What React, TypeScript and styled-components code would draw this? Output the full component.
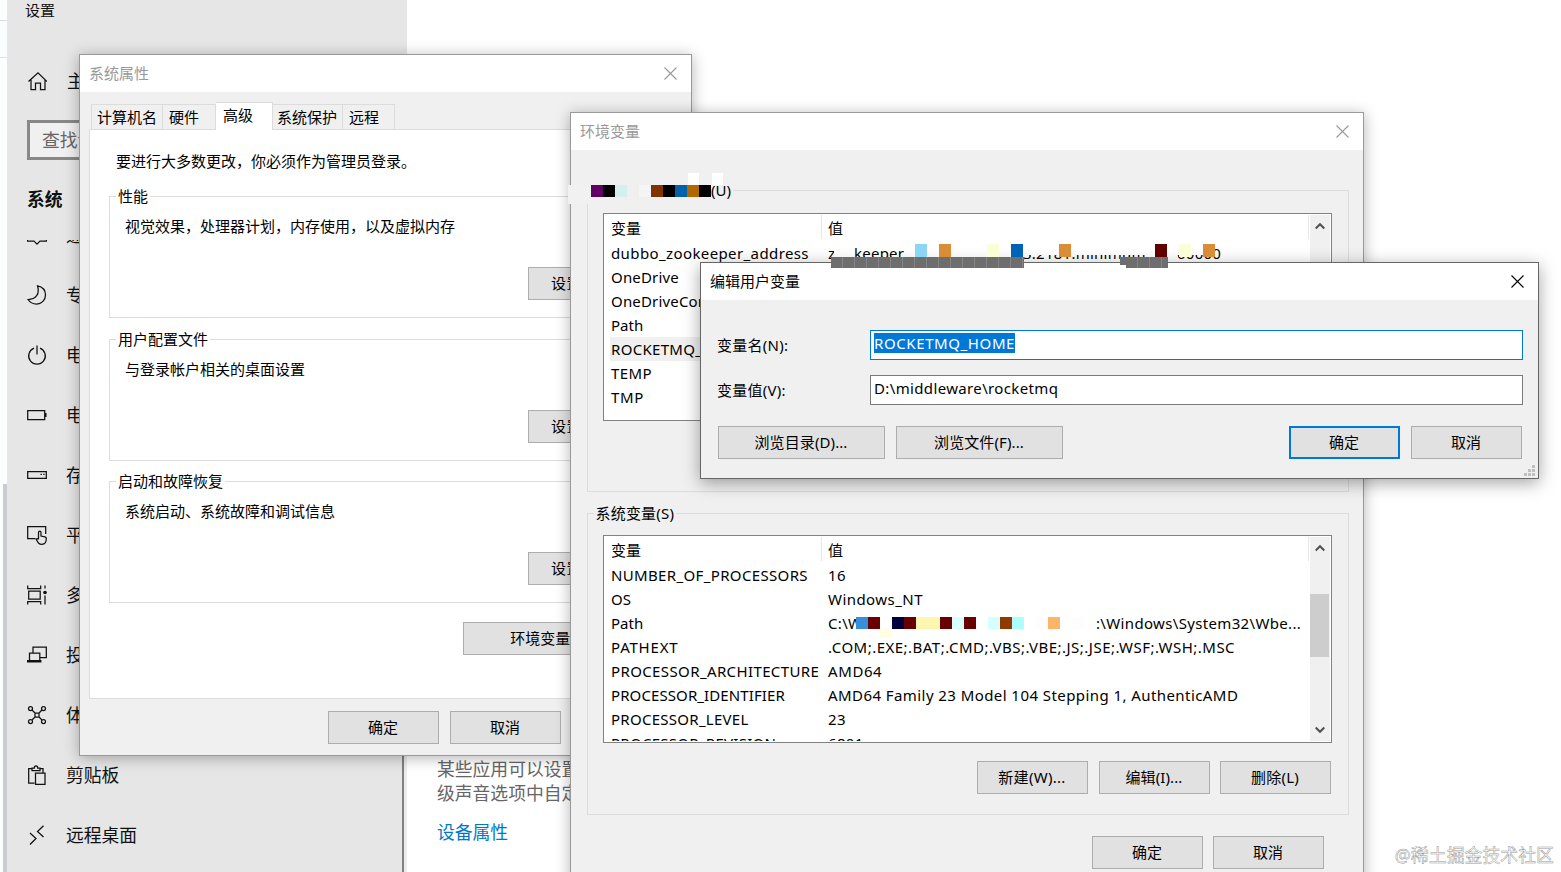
import React from 'react';
import styled, { createGlobalStyle, css } from 'styled-components';

const GlobalStyle = createGlobalStyle`
  *, *::before, *::after { box-sizing: border-box; }
  body { margin: 0; background: #fff; overflow: hidden; }
  body, button {
    font-family: "Noto Sans", "Noto Sans CJK SC", sans-serif;
    font-size: 15px;
    line-height: 20px;
    color: #000;
  }
`;

const Desktop = styled.div`
  position: relative;
  width: 1561px;
  height: 872px;
  overflow: hidden;
  background: #fff;
`;

/* ---------- Settings app in the background ---------- */

const SettingsApp = styled.div`
  display: flex;
  height: 872px;
  color: #111;
  font-size: 17.8px;
  line-height: 24px;
`;

const Edge = styled.div`
  width: 7px;
  display: flex;
  flex-direction: column;
  background: #fdfefe;
`;

const EdgeCard = styled.div`
  height: 38px;
  margin-top: 20px;
  border-top: 1px solid #dcdfe2;
  border-bottom: 1px solid #d8e4e4;
  background: #f9fdfd;
`;

const EdgeThumb = styled.div`
  width: 4px;
  margin: 426px 0 0 3px;
  flex: 1;
  background: #c9cbd0;
`;

const Sidebar = styled.div`
  width: 400px;
  display: flex;
  flex-direction: column;
  background: #e6e6e6;
`;

const AppTitle = styled.div`
  font-size: 15px;
  line-height: 20px;
  padding-left: 18px;
`;

const NavRow = styled.div`
  display: flex;
  align-items: center;
  flex: none;
  height: 60px;
  padding-left: 20px;
  gap: 19px;
  svg { flex: none; }
`;

const HomeRow = styled(NavRow)`
  margin-top: 31px;
  gap: 20px;
`;

const SearchBox = styled.div`
  width: 352px;
  height: 40px;
  flex: none;
  margin: 9px 0 0 20px;
  border: 3px solid #888;
  padding-left: 12px;
  line-height: 34px;
  color: #666;
  background: #f0f0f0;
`;

const SectionTitle = styled.div`
  margin: 27px 0 0 20px;
  font-weight: 700;
`;

const NavScroll = styled.div`
  flex: 1;
  min-height: 0;
  margin-top: 29px;
  overflow: hidden;
`;

const NavList = styled.div`
  margin-top: -35px;
`;

const Divider = styled.div`
  width: 5px;
  height: 120px;
  align-self: flex-end;
  margin-left: -5px;
  border-left: 2px solid #808080;
  background: #ececec;
`;

const SettingsContent = styled.div`
  padding: 757px 0 0 30px;
  width: 260px;
  white-space: nowrap;
  color: #666;
`;

const SettingsLink = styled.div`
  margin-top: 15px;
  color: #0078c8;
`;

/* ---------- Shared dialog parts ---------- */

const Window = styled.section<{ $x: number; $y: number; $w: number; $h: number; $active?: boolean }>`
  position: absolute;
  left: ${p => p.$x}px;
  top: ${p => p.$y}px;
  width: ${p => p.$w}px;
  height: ${p => p.$h}px;
  display: flex;
  flex-direction: column;
  background: #f0f0f0;
  border: 1px solid ${p => (p.$active ? '#666' : '#999')};
  box-shadow: ${p => (p.$active ? '0 4px 16px rgba(0,0,0,.36)' : '0 2px 14px rgba(0,0,0,.3)')};
`;

const TitleBar = styled.header<{ $active?: boolean }>`
  display: flex;
  justify-content: space-between;
  align-items: center;
  height: 37px;
  flex: none;
  padding: 0 14.5px 2px 9px;
  background: #fff;
  color: ${p => (p.$active ? '#000' : '#999')};
  svg { margin-top: 1px; }
`;

const Button = styled.button<{ $w?: number; $primary?: boolean; $ls?: number }>`
  width: ${p => p.$w ?? 111}px;
  height: 33px;
  flex: none;
  padding: 0 1px 2px 0;
  white-space: nowrap;
  letter-spacing: ${p => p.$ls ?? 0}px;
  background: #e1e1e1;
  border: ${p => (p.$primary ? '2px solid #0078d7' : '1px solid #adadad')};
`;

const ButtonRow = styled.div<{ $left: number; $top: number; $gap?: number }>`
  display: flex;
  gap: ${p => p.$gap ?? 11}px;
  margin: ${p => p.$top}px 0 0 ${p => p.$left}px;
`;

const DeleteButton = styled(Button)`
  margin-left: -1px;
`;

const Group = styled.fieldset<{ $top: number; $w: number; $h: number; $pad: string }>`
  margin: ${p => p.$top}px 0 0;
  width: ${p => p.$w}px;
  height: ${p => p.$h}px;
  min-width: 0;
  padding: ${p => p.$pad};
  border: 1px solid #dcdcdc;
`;

const Legend = styled.legend<{ $shift: number; $ls?: number }>`
  display: flex;
  align-items: center;
  height: 21px;
  line-height: 21px;
  margin-left: ${p => p.$shift}px;
  padding: 0 2px;
  letter-spacing: ${p => p.$ls ?? 0}px;
`;

/* ---------- System properties ---------- */

const PropsBody = styled.div`
  display: flex;
  flex-direction: column;
  padding: 10px 0 0 9px;
`;

const Tabs = styled.div`
  display: flex;
  align-items: flex-end;
  height: 27px;
  padding-left: 2px;
`;

const Tab = styled.div<{ $w: number; $pad?: number; $active?: boolean; $first?: boolean }>`
  width: ${p => p.$w}px;
  height: 25px;
  padding-left: ${p => p.$pad ?? 6}px;
  line-height: 25px;
  white-space: nowrap;
  border-top: 1px solid #dcdcdc;
  border-right: 1px solid #dcdcdc;
  background: #f0f0f0;
  ${p => p.$first && css`border-left: 1px solid #dcdcdc;`}
  ${p => p.$active && css`
    height: 28px;
    margin-bottom: -1px;
    background: #fff;
    line-height: 24px;
    z-index: 1;
  `}
`;

const TabPanel = styled.div`
  width: 592px;
  height: 570px;
  padding: 21px 0 0 19px;
  border: 1px solid #dcdcdc;
  background: #fff;
`;

const Intro = styled.p`
  margin: 0 0 0 7px;
`;

/* ---------- Variable lists ---------- */

const ListBox = styled.div`
  display: flex;
  width: 729px;
  height: 208px;
  padding: 1px;
  border: 1px solid #828282;
  background: #fff;
`;

const Table = styled.div`
  width: 705px;
  overflow: hidden;
`;

const Row = styled.div<{ $header?: boolean; $selected?: boolean }>`
  display: grid;
  grid-template-columns: 217px 487px;
  height: ${p => (p.$header ? 26 : 24)}px;
  white-space: pre;
  ${p => p.$selected && css`background: linear-gradient(90deg, #fff 5px, #f0f0f0 5px);`}
`;

const Cell = styled.div<{ $header?: boolean; $ls?: number }>`
  padding-left: 6px;
  height: 24px;
  display: flex;
  align-items: center;
  letter-spacing: ${p => p.$ls ?? 0}px;
  ${p => p.$header && css`border-right: 1px solid #e5e5e5; padding-top: 2px;`}
`;

const Part = styled.span<{ $w: number }>`
  width: ${p => p.$w}px;
  flex: none;
  overflow: hidden;
`;

const ScrollTrack = styled.div`
  width: 20px;
  display: flex;
  flex-direction: column;
  align-items: center;
  justify-content: space-between;
  background: #f0f0f0;
  padding: 7px 1px 7px 0;
`;

const ScrollThumb = styled.div`
  width: 19px;
  height: 63px;
  margin: 42px 0 auto;
  background: #cdcdcd;
`;

const EnvBody = styled.div`
  padding: 30px 0 0 16px;
`;

/* ---------- Edit dialog ---------- */

const EditBody = styled.div`
  padding: 30px 0 0 16px;
`;

const FieldRow = styled.label`
  display: flex;
  align-items: center;
  height: 30px;
  margin-bottom: 15px;
`;

const FieldLabel = styled.span`
  width: 153px;
  letter-spacing: 0.25px;
`;

const Field = styled.div<{ $focus?: boolean; $ls?: number }>`
  width: 653px;
  height: 30px;
  padding: 2px 3px;
  border: 1px solid ${p => (p.$focus ? '#0078d7' : '#7a7a7a')};
  background: #fff;
  letter-spacing: ${p => p.$ls ?? 0}px;
`;

const Selected = styled.span`
  display: inline-block;
  background: #0078d7;
  color: #fff;
`;

const EditButtons = styled.div`
  display: flex;
  gap: 11px;
  margin: 21px 0 0 1px;
`;

const Spacer = styled.div`
  width: 204px;
`;

const Grip = styled.svg`
  position: absolute;
  right: 3px;
  bottom: 2px;
`;

/* ---------- Mosaic strips that hide private text ---------- */

const Strip = styled.span`
  display: inline-flex;
  flex: none;
`;

const Tile = styled.i<{ $c: string }>`
  width: 12px;
  height: 12px;
  background: ${p => p.$c};
`;

const Mask = styled.div<{ $x: number; $y: number; $w: number; $h: number; $c: string }>`
  position: absolute;
  left: ${p => p.$x}px;
  top: ${p => p.$y}px;
  width: ${p => p.$w}px;
  height: ${p => p.$h}px;
  background: ${p => p.$c};
`;

const Watermark = styled.div`
  position: absolute;
  right: 7px;
  bottom: 5px;
  font-size: 17.9px;
  line-height: 24px;
  color: #fff;
  -webkit-text-stroke: 0.5px #999;
  white-space: nowrap;
`;

/* ---------- Icons ---------- */

const Icon = ({ children }: { children: React.ReactNode }) => (
  <svg width="20" height="20" viewBox="0 0 20 20" fill="none" stroke="#111" strokeWidth="1.25">
    {children}
  </svg>
);

const HomeIcon = () => (
  <Icon><path d="M1.5 10.5 11 1.8l9 8.7M4 8.5v10h4.5v-6.500h5v6.500H18v-10" /></Icon>
);
const ChatIcon = () => (
  <Icon><path d="M.5 2.500h19v13.600h-6.500l-3 3-3-3H.5z" /></Icon>
);
const MoonIcon = () => (
  <Icon><path d="M10.500 .8c5 1 8 4.700 8 9.200 0 5-3.800 9-8.800 9-3.700 0-7-1.800-8.700-4.500C9 14.500 13 9 10.500.8z" /></Icon>
);
const PowerIcon = () => (
  <Icon><path d="M7 3.200a8.300 8.300 0 1 0 6 0M10 .5v9" /></Icon>
);
const BatteryIcon = () => (
  <Icon><path d="M.7 5.500h17v9H.7zM18.900 8v4" /></Icon>
);
const StorageIcon = () => (
  <Icon><path d="M.7 6.700h18.600v6.600H.7zM13.500 9.300h1.400M16.200 9.300h1.400" /></Icon>
);
const TabletIcon = () => (
  <Icon>
    <path d="M8.500 13.500H.7V1.500h18V9" />
    <path d="M11.500 14V7.500c0-2 2.500-2 2.500 0V11l4 .8c1 .3 1.300.7 1.300 1.700 0 3-1 5.800-4.300 5.800-3 0-4-1.300-5.800-5 .5-1 1.500-1 2.300.2" />
  </Icon>
);
const TaskIcon = () => (
  <Icon>
    <path d="M.7.500v3h13v-3M1.700 6h11.500v8H1.700zM.7 19.500v-3h13v3M18 .5v3M18 10.500v9" />
    <circle cx="18" cy="7.500" r="1.200" fill="#111" />
  </Icon>
);
const ProjectIcon = () => (
  <Icon><path d="M6 7.500V2h13.300v10.500h-6M2.500 8h10.300v7.500H2.500zM.5 15.500h13.300v1.300H.5z" /></Icon>
);
const ShareIcon = () => (
  <Icon>
    <circle cx="3.500" cy="3.500" r="2" /><circle cx="16.500" cy="3.500" r="2" />
    <circle cx="3.500" cy="16.500" r="2" /><circle cx="16.500" cy="16.500" r="2" />
    <path d="M8 8h4v4H8zM5 5l3 3M15 5l-3 3M5 15l3-3M15 15l-3-3" />
  </Icon>
);
const ClipIcon = () => (
  <Icon><path d="M7.500 18H1.700V3.500H5M13 3.500h3v4M5 5.500V3.200h2.300c0-3 3.400-3 3.400 0H13v2.300zM8.500 8H18v11.300H8.500z" /></Icon>
);
const RemoteIcon = () => (
  <Icon><path d="M3 8l6 5.500-6 6M16.500 .8 10.500 6.500l6 5.500" /></Icon>
);

const CloseIcon = ({ color }: { color: string }) => (
  <svg width="13" height="13" viewBox="0 0 13 13" stroke={color} strokeWidth="1.1">
    <path d="M.5 .5l12 12M12.500.5l-12 12" />
  </svg>
);

const Chevron = ({ down }: { down?: boolean }) => (
  <svg width="10" height="8" viewBox="0 0 10 8" fill="none" stroke="#505050" strokeWidth="2">
    <path d={down ? 'M.7 1.500 5 5.800l4.300-4.300' : 'M.7 6.500 5 2.200l4.300 4.300'} />
  </svg>
);

/* ---------- Data ---------- */

const NAV: [React.FC, string][] = [
  [ChatIcon, '通知和操作'],
  [MoonIcon, '专注助手'],
  [PowerIcon, '电源和睡眠'],
  [BatteryIcon, '电池'],
  [StorageIcon, '存储'],
  [TabletIcon, '平板电脑'],
  [TaskIcon, '多任务处理'],
  [ProjectIcon, '投影到此电脑'],
  [ShareIcon, '体验共享'],
  [ClipIcon, '剪贴板'],
  [RemoteIcon, '远程桌面'],
];

const PROP_GROUPS = [
  { top: 15, name: '性能', text: '视觉效果，处理器计划，内存使用，以及虚拟内存', button: '设置(S)...' },
  { top: 11, name: '用户配置文件', text: '与登录帐户相关的桌面设置', button: '设置(E)...' },
  { top: 10, name: '启动和故障恢复', text: '系统启动、系统故障和调试信息', button: '设置(T)...' },
];

type Variable = { name: string; value?: React.ReactNode; nls?: number; vls?: number; selected?: boolean };

const NAME_TILES = ['#5f0062', '#000', '#d3f0ec', '#efefef', '#f5f5f5', '#803300', '#000', '#0062ab', '#b26800', '#000'];
const PATH_TILES = [
  '#388fd9', '#680000', '#fff', '#00003c', '#680000', '#fff6b0', '#fff6b0', '#680000', '#d6ffff', '#680000',
  '#fff', '#d6ffff', '#903a00', '#adffff', '#fff', '#fdfdfd', '#ffb469', '#fff', '#fdfdfd', '#fff',
];

const Tiles = ({ colors }: { colors: string[] }) => (
  <Strip>{colors.map((c, i) => <Tile key={i} $c={c} />)}</Strip>
);

const USER_VARS: Variable[] = [
  {
    name: 'dubbo_zookeeper_address',
    nls: 0.39,
    value: <><Part $w={195}>zookeeper</Part><Part $w={154}>3.2181.minimum</Part>60000</>,
    vls: 0.25,
  },
  { name: 'OneDrive', nls: 0.17 },
  { name: 'OneDriveConsumer', nls: 0.17 },
  { name: 'Path' },
  { name: 'ROCKETMQ_HOME', nls: 0.3, selected: true },
  { name: 'TEMP', nls: 0.4 },
  { name: 'TMP', nls: 0.6 },
];

const SYSTEM_VARS: Variable[] = [
  { name: 'NUMBER_OF_PROCESSORS', nls: 0.35, value: '16', vls: 0.4 },
  { name: 'OS', value: 'Windows_NT', vls: 0.45 },
  {
    name: 'Path',
    value: <><Part $w={28}>C:\W</Part><Tiles colors={PATH_TILES} />:\Windows\System32\Wbe...</>,
    vls: 0.34,
  },
  { name: 'PATHEXT', nls: 0.8, value: '.COM;.EXE;.BAT;.CMD;.VBS;.VBE;.JS;.JSE;.WSF;.WSH;.MSC', vls: 0.48 },
  { name: 'PROCESSOR_ARCHITECTURE', nls: 0.38, value: 'AMD64', vls: 0.6 },
  { name: 'PROCESSOR_IDENTIFIER', nls: 0.1, value: 'AMD64 Family 23 Model 104 Stepping 1, AuthenticAMD', vls: 0.43 },
  { name: 'PROCESSOR_LEVEL', nls: 0.27, value: '23', vls: 0.3 },
  { name: 'PROCESSOR_REVISION', nls: 0.27, value: '6801', vls: 0.3 },
];

const VariableList = ({ items, thumb }: { items: Variable[]; thumb?: boolean }) => (
  <ListBox>
    <Table>
      <Row $header><Cell $header>变量</Cell><Cell $header>值</Cell></Row>
      {items.map(v => (
        <Row key={v.name} $selected={v.selected}>
          <Cell $ls={v.nls}>{v.name}</Cell>
          <Cell $ls={v.vls}>{v.value}</Cell>
        </Row>
      ))}
    </Table>
    <ScrollTrack>
      <Chevron />
      {thumb && <ScrollThumb />}
      <Chevron down />
    </ScrollTrack>
  </ListBox>
);

const GRIP = [[8, 0], [4, 4], [8, 4], [0, 8], [4, 8], [8, 8]];

const ADDRESS_TILES: [number, string][] = [
  [915, '#8dd5f5'], [939, '#d98d36'], [987, '#faffd6'], [1011, '#0063b8'], [1059, '#d98d36'],
  [1155, '#600000'], [1179, '#faffd6'], [1203, '#d98d36'],
];

export default function App() {
  return (
    <Desktop>
      <GlobalStyle />
      <SettingsApp>
        <Edge><EdgeCard /><EdgeThumb /></Edge>
        <Sidebar>
          <AppTitle>设置</AppTitle>
          <HomeRow><HomeIcon />主页</HomeRow>
          <SearchBox>查找设置</SearchBox>
          <SectionTitle>系统</SectionTitle>
          <NavScroll>
            <NavList>
              {NAV.map(([Glyph, label]) => <NavRow key={label}><Glyph />{label}</NavRow>)}
            </NavList>
          </NavScroll>
        </Sidebar>
        <Divider />
        <SettingsContent>
          某些应用可以设置在高<br />级声音选项中自定义
          <SettingsLink>设备属性</SettingsLink>
        </SettingsContent>
      </SettingsApp>

      <Window $x={79} $y={54} $w={613} $h={702}>
        <TitleBar>系统属性<CloseIcon color="#999" /></TitleBar>
        <PropsBody>
          <Tabs>
            <Tab $w={72} $pad={5} $first>计算机名</Tab>
            <Tab $w={53}>硬件</Tab>
            <Tab $w={57} $pad={7} $active>高级</Tab>
            <Tab $w={70} $pad={4}>系统保护</Tab>
            <Tab $w={52}>远程</Tab>
          </Tabs>
          <TabPanel>
            <Intro>要进行大多数更改，你必须作为管理员登录。</Intro>
            {PROP_GROUPS.map(g => (
              <Group key={g.name} $top={g.top} $w={552} $h={132} $pad="9px 0 0 15px">
                <Legend $shift={-9}>{g.name}</Legend>
                {g.text}
                <ButtonRow $left={403} $top={31}><Button $ls={0.6}>{g.button}</Button></ButtonRow>
              </Group>
            ))}
            <ButtonRow $left={354} $top={19}><Button $w={188}>环境变量(N)...</Button></ButtonRow>
          </TabPanel>
          <ButtonRow $left={239} $top={12}>
            <Button>确定</Button>
            <Button>取消</Button>
          </ButtonRow>
        </PropsBody>
      </Window>

      <Window $x={570} $y={112} $w={794} $h={790}>
        <TitleBar>环境变量<CloseIcon color="#999" /></TitleBar>
        <EnvBody>
          <Group $top={0} $w={762} $h={312} $pad="12px 0 0 15px">
            <Legend $shift={-14}><Tiles colors={NAME_TILES} />(U)</Legend>
            <VariableList items={USER_VARS} />
          </Group>
          <Group $top={11} $w={762} $h={312} $pad="11px 0 0 15px">
            <Legend $shift={-9.5} $ls={0.2}>系统变量(S)</Legend>
            <VariableList items={SYSTEM_VARS} thumb />
            <ButtonRow $left={374} $top={18}>
              <Button $ls={0.3}>新建(W)...</Button>
              <Button $ls={0.1}>编辑(I)...</Button>
              <DeleteButton $ls={0.2}>删除(L)</DeleteButton>
            </ButtonRow>
          </Group>
          <ButtonRow $left={505} $top={21} $gap={10}>
            <Button>确定</Button>
            <Button>取消</Button>
          </ButtonRow>
        </EnvBody>
      </Window>

      <Mask $x={568} $y={185} $w={23} $h={19} $c="#f1f1f1" />
      <Mask $x={688} $y={173} $w={11} $h={12} $c="#fff" />
      <Mask $x={712} $y={173} $w={11} $h={12} $c="#fff" />
      <Mask $x={834} $y={244} $w={20} $h={14} $c="#fff" />
      <Mask $x={906} $y={244} $w={117} $h={14} $c="#fff" />
      <Mask $x={1023} $y={244} $w={190} $h={11} $c="#fff" />
      <Mask $x={880} $y={629} $w={12} $h={9} $c="#fffee0" />

      <Window $x={700} $y={262} $w={839} $h={217} $active>
        <TitleBar $active>编辑用户变量<CloseIcon color="#000" /></TitleBar>
        <EditBody>
          <FieldRow><FieldLabel>变量名(N):</FieldLabel><Field $focus $ls={0.6}><Selected>ROCKETMQ_HOME</Selected></Field></FieldRow>
          <FieldRow><FieldLabel>变量值(V):</FieldLabel><Field $ls={0.36}>D:\middleware\rocketmq</Field></FieldRow>
          <EditButtons>
            <Button $w={167} $ls={0.1}>浏览目录(D)...</Button>
            <Button $w={167} $ls={0.1}>浏览文件(F)...</Button>
            <Spacer />
            <Button $primary>确定</Button>
            <Button>取消</Button>
          </EditButtons>
        </EditBody>
        <Grip width="11" height="11" fill="#bfbfbf">
          {GRIP.map(([x, y]) => <rect key={`${x}-${y}`} x={x} y={y} width="3" height="3" />)}
        </Grip>
      </Window>

      {ADDRESS_TILES.map(([x, c]) => <Mask key={x} $x={x} $y={244} $w={12} $h={13} $c={c} />)}
      <Mask $x={831} $y={257} $w={193} $h={11} $c="repeating-linear-gradient(90deg, #6e6e6e 0 11px, #858585 11px 12px)" />
      <Mask $x={1120} $y={257} $w={48} $h={8} $c="#6e6e6e" />
      <Mask $x={1126} $y={257} $w={42} $h={11} $c="repeating-linear-gradient(90deg, #6e6e6e 0 11px, #858585 11px 12px)" />
      <Watermark>@稀土掘金技术社区</Watermark>
    </Desktop>
  );
}
